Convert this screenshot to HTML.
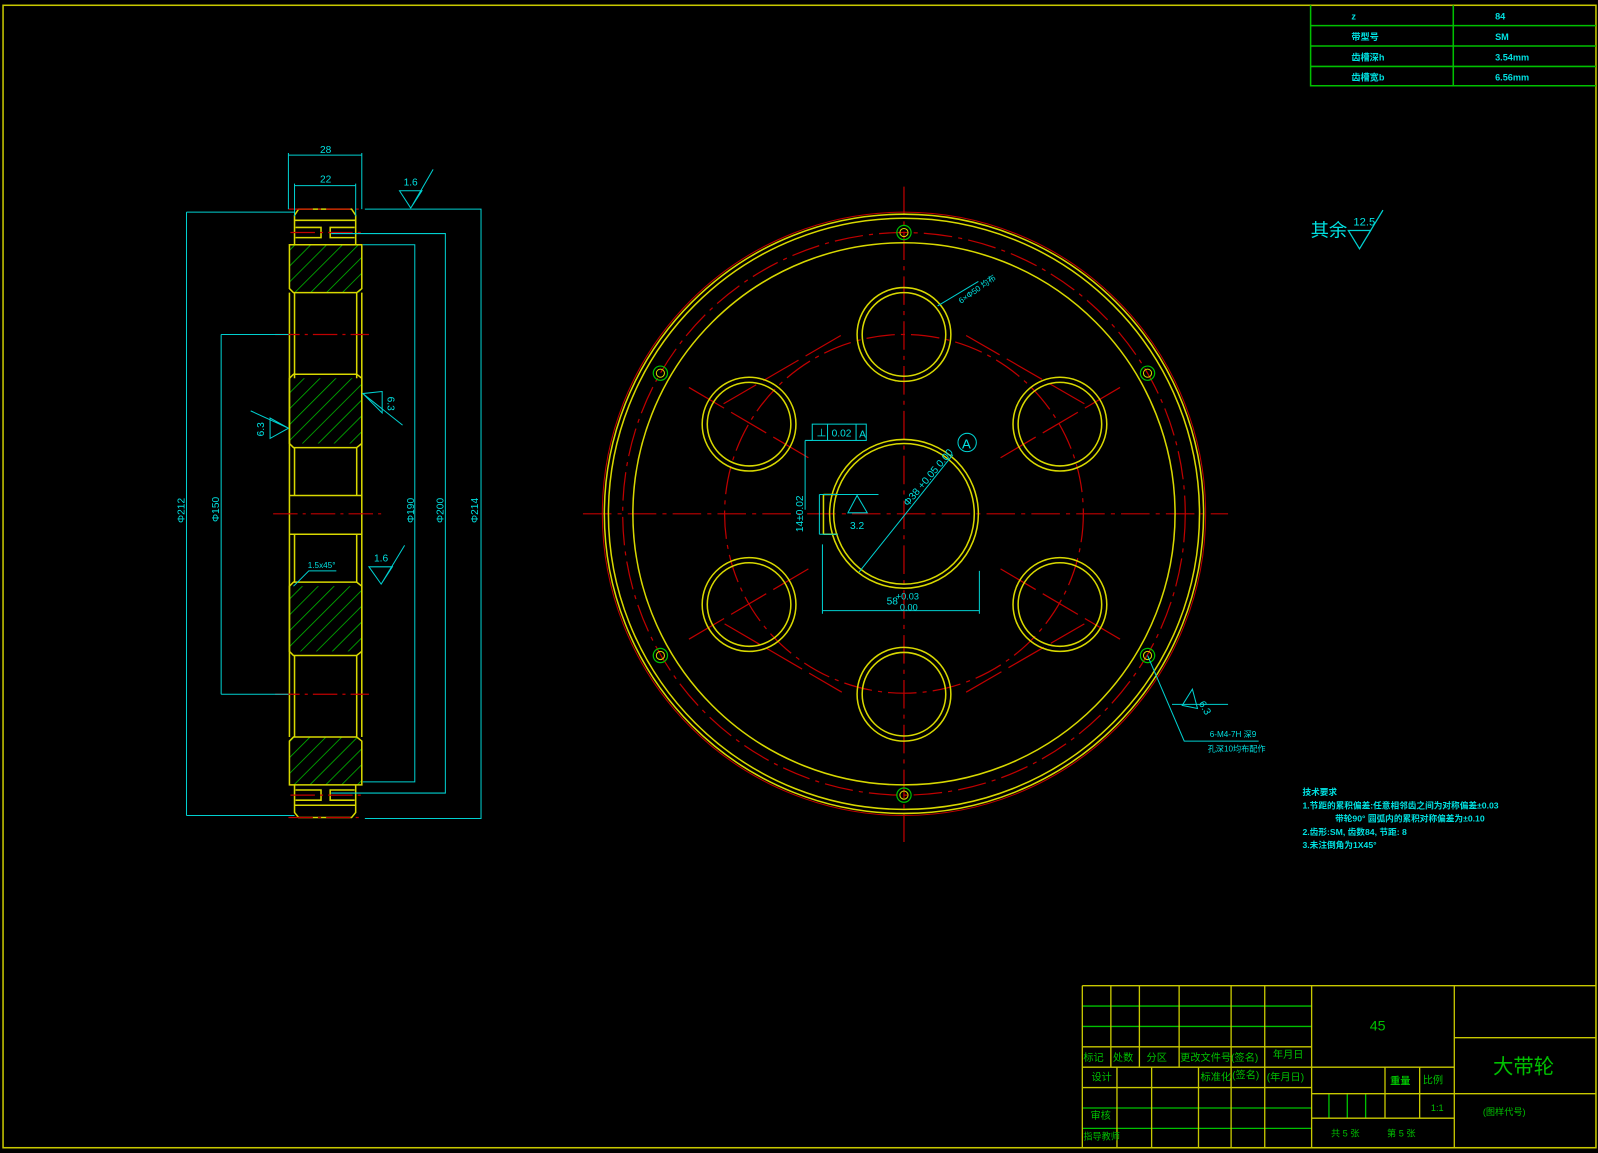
<!DOCTYPE html>
<html><head><meta charset="utf-8"><style>
html,body{margin:0;padding:0;background:#000;}
svg{display:block}
text{font-family:"Liberation Sans","Noto Sans CJK SC",sans-serif;}
</style></head><body>
<svg width="1598" height="1153" viewBox="0 0 1568 1131" xmlns="http://www.w3.org/2000/svg">
<rect x="0" y="0" width="1568" height="1131" fill="#000"/>
<rect x="3" y="5" width="1563" height="1121" fill="none" stroke="#c8c800" stroke-width="1.5"/>

<g stroke="#00c000" stroke-width="1.5" fill="none">
<path d="M1286 5V84H1566M1286 25H1566M1286 45H1566M1286 65H1566M1426 5V84"/>
</g>
<g fill="#00e0e0" font-size="9" font-weight="bold">
<text x="1326" y="19">z</text><text x="1467" y="19">84</text>
<text x="1326" y="39">带型号</text><text x="1467" y="39">SM</text>
<text x="1326" y="59">齿槽深h</text><text x="1467" y="59">3.54mm</text>
<text x="1326" y="79">齿槽宽b</text><text x="1467" y="79">6.56mm</text>
</g>

<text x="1286" y="232" fill="#00e0e0" font-size="18">其余</text>
<g stroke="#00d0d0" fill="none" stroke-width="1.2"><path d="M1323 226H1345L1334 244ZM1334 244L1357 206"/></g>
<text x="1328" y="221" fill="#00e0e0" font-size="11">12.5</text>

<defs><pattern id="h" width="11" height="11" patternUnits="userSpaceOnUse" patternTransform="rotate(45)"><line x1="0" y1="0" x2="0" y2="11" stroke="#00c000" stroke-width="1.5"/></pattern></defs>
<g fill="url(#h)" stroke="none">
<rect x="284" y="240" width="71" height="47"/>
<rect x="284" y="371" width="71" height="64"/>
<rect x="284" y="575" width="71" height="64"/>
<rect x="284" y="723" width="71" height="47"/>
</g>
<g stroke="#d8d800" stroke-width="1.5" fill="none">
<path d="M289 240V211L293 205H345L349 211V240M284 240V283L288 287H350L355 283V240Z"/>
<path d="M289 770V797L293 802H345L349 797V770M284 770V727L288 723H350L355 727V770Z"/>
<path d="M284 371L288 367H350L355 371V435L350 439H288L284 435Z"/>
<path d="M284 575L288 571H350L355 575V639L350 643H288L284 639Z"/>
<path d="M284 287V723M355 287V723M289 287V371M350 287V371M289 439V486M350 439V486M284 486H355M284 524H355M289 524V571M350 524V571M289 643V723M350 643V723"/>
<path d="M289 216H349M289 790H349"/>
<path d="M290 223H315V233H290M348 223H324V233H348M290 775H315V785H290M348 775H324V785H348"/>
</g>
<g stroke="#c00000" stroke-width="1.2" stroke-dasharray="24 5 3 5" fill="none">
<path d="M270 328H362M270 681H362M268 504H375M283 205H357M283 802H357M285 228H355M285 780H355"/>
</g>
<g stroke="#00d0d0" stroke-width="1" fill="none">
<path d="M283 150V205M355 150V205M283 152H355M289 180V212M349 180V212M289 182H349"/>
<path d="M183 208H289M183 208V800M183 800H289"/>
<path d="M217 328H283M217 328V681M217 681H283"/>
<path d="M358 205H472V803H358M325 229H437V778H325M356 240H407V767H356"/>
<path d="M392 187H414L403 204ZM403 204L425 166M356 386L375 405L375 384ZM356 386L395 417M283 420L265 410L265 430ZM283 420L246 403M362 556L374 573L385 556ZM374 573L397 535M288 575L303 560H330"/>
</g>
<g fill="#00e0e0" font-size="10">
<text x="314" y="150">28</text><text x="314" y="179">22</text>
<text x="396" y="182">1.6</text><text x="367" y="551">1.6</text>
<text x="302" y="557" font-size="8">1.5x45°</text>
<text transform="translate(181 513) rotate(-90)">Φ212</text>
<text transform="translate(215 512) rotate(-90)">Φ150</text>
<text transform="translate(406 513) rotate(-90)">Φ190</text>
<text transform="translate(435 513) rotate(-90)">Φ200</text>
<text transform="translate(469 513) rotate(-90)">Φ214</text>
<text transform="translate(259 428) rotate(-90)">6.3</text>
<text transform="translate(380 389) rotate(90)">6.3</text>
</g>

<g stroke="#c00000" stroke-width="1.2" fill="none" stroke-dasharray="28 6 4 6">
<path d="M572 504H1205M887 183V826"/>
<circle cx="887" cy="504" r="276"/>
<circle cx="887" cy="504" r="176"/>
<circle cx="887" cy="504" r="296" stroke-dasharray="none" stroke-width="1"/>
<path d="M825 329L710 396M1064 396L948 329M711 612L826 679M948 679L1064 612M676 380L795 450M1099 380L980 450M676 627L795 557M1099 627L980 557" stroke-dasharray="40 8"/>
</g>
<g stroke="#d8d800" stroke-width="1.5" fill="none">
<circle cx="887" cy="504" r="294"/>
<circle cx="887" cy="504" r="290"/>
<circle cx="887" cy="504" r="266"/>
<circle cx="887" cy="504" r="73"/>
<circle cx="887" cy="504" r="69"/>
<circle cx="887" cy="328" r="46"/><circle cx="887" cy="328" r="41"/>
<circle cx="1040" cy="416" r="46"/><circle cx="1040" cy="416" r="41"/>
<circle cx="1040" cy="593" r="46"/><circle cx="1040" cy="593" r="41"/>
<circle cx="887" cy="681" r="46"/><circle cx="887" cy="681" r="41"/>
<circle cx="735" cy="593" r="46"/><circle cx="735" cy="593" r="41"/>
<circle cx="735" cy="416" r="46"/><circle cx="735" cy="416" r="41"/>
<path d="M808 485V524M808 485H822M808 524H822"/>
</g>
<g stroke="#00c000" stroke-width="1.2" fill="none">
<circle cx="887" cy="228" r="7"/><circle cx="1126" cy="366" r="7"/><circle cx="1126" cy="643" r="7"/>
<circle cx="887" cy="780" r="7"/><circle cx="648" cy="643" r="7"/><circle cx="648" cy="366" r="7"/>
</g>
<g stroke="#d8d800" stroke-width="1" fill="none">
<circle cx="887" cy="228" r="4"/><circle cx="1126" cy="366" r="4"/><circle cx="1126" cy="643" r="4"/>
<circle cx="887" cy="780" r="4"/><circle cx="648" cy="643" r="4"/><circle cx="648" cy="366" r="4"/>
</g>
<g stroke="#00d0d0" stroke-width="1" fill="none">
<path d="M843 561L935 446M949 434m-9 0a9 9 0 1 0 18 0a9 9 0 1 0 -18 0"/>
<path d="M804 485H862M804 524H822M804 485V524M790 432V500M790 432H797"/>
<rect x="797" y="416" width="53" height="16"/>
<path d="M812 416V432M840 416V432"/>
<path d="M832 503L841 486L851 503Z"/>
<path d="M807 534V602M961 560V602M807 599H961"/>
<path d="M920 300L960 276"/>
<path d="M1126 643L1162 727H1235M1160 692L1170 676L1175 695ZM1150 691H1205"/>
</g>
<g fill="#00e0e0" font-size="10">
<text x="816" y="428">0.02</text><text x="843" y="429">A</text><text x="801" y="428">⊥</text>
<text x="834" y="519">3.2</text>
<text x="944" y="440" font-size="13">A</text>
<text transform="translate(788 522) rotate(-90)">14±0.02</text>
<text transform="translate(891 497) rotate(-50)">Φ38 +0.05 0.00</text>
<text x="870" y="593">58</text><text x="879" y="588" font-size="9">+0.03</text><text x="883" y="599" font-size="9">0.00</text>
<text transform="translate(943 298) rotate(-35)" font-size="8">6×Φ50 均布</text>
<text transform="translate(1176 690) rotate(60)">6.3</text>
<text x="1187" y="723" font-size="8">6-M4-7H 深9</text>
<text x="1185" y="737" font-size="8">孔深10均布配作</text>
</g>

<g fill="#00e0e0" font-size="8.5" font-weight="bold">
<text x="1278" y="780">技术要求</text>
<text x="1278" y="793">1.节距的累积偏差:任意相邻齿之间为对称偏差±0.03</text>
<text x="1310" y="806">带轮90° 圆弧内的累积对称偏差为±0.10</text>
<text x="1278" y="819">2.齿形:SM, 齿数84, 节距: 8</text>
<text x="1278" y="832">3.未注倒角为1X45°</text>
</g>

<g stroke="#00c000" stroke-width="1.3" fill="none">
<path d="M1062 987H1287M1062 1007H1287M1062 1087H1287M1062 1107H1287M1304 1073V1097M1322 1073V1097M1340 1073V1097"/>
</g>
<g stroke="#c8c800" stroke-width="1.3" fill="none">
<path d="M1062 967H1566M1062 967V1126M1287 967V1126M1427 967V1126"/>
<path d="M1090 967V1047M1118 967V1047M1157 967V1047M1208 967V1126M1241 967V1126M1062 1027H1287M1062 1047H1287M1062 1067H1287"/>
<path d="M1096 1047V1126M1130 1047V1126M1176 1047V1126"/>
<path d="M1287 1047H1427M1287 1073H1427M1287 1097H1427M1359 1047V1097M1393 1047V1097M1427 1018H1566M1427 1073H1566"/>
</g>
<g fill="#00c000" font-size="10">
<text x="1063" y="1041">标记</text><text x="1092" y="1041">处数</text><text x="1125" y="1041">分区</text>
<text x="1158" y="1041">更改文件号</text><text x="1208" y="1041">(签名)</text><text x="1249" y="1038">年月日</text>
<text x="1071" y="1060">设计</text><text x="1178" y="1060">标准化</text><text x="1209" y="1058">(签名)</text><text x="1243" y="1060">(年月日)</text>
<text x="1070" y="1098">审核</text><text x="1063" y="1118" font-size="9">指导教师</text>
<text x="1364" y="1064" font-weight="bold">重量</text><text x="1396" y="1063">比例</text>
<text x="1404" y="1090" font-size="9">1:1</text>
<text x="1344" y="1011" font-size="14">45</text>
<text x="1465" y="1053" font-size="20">大带轮</text>
<text x="1455" y="1094" font-size="9">(图样代号)</text>
<text x="1306" y="1115" font-size="9">共 5 张</text><text x="1361" y="1115" font-size="9">第 5 张</text>
</g>
</svg>
</body></html>
